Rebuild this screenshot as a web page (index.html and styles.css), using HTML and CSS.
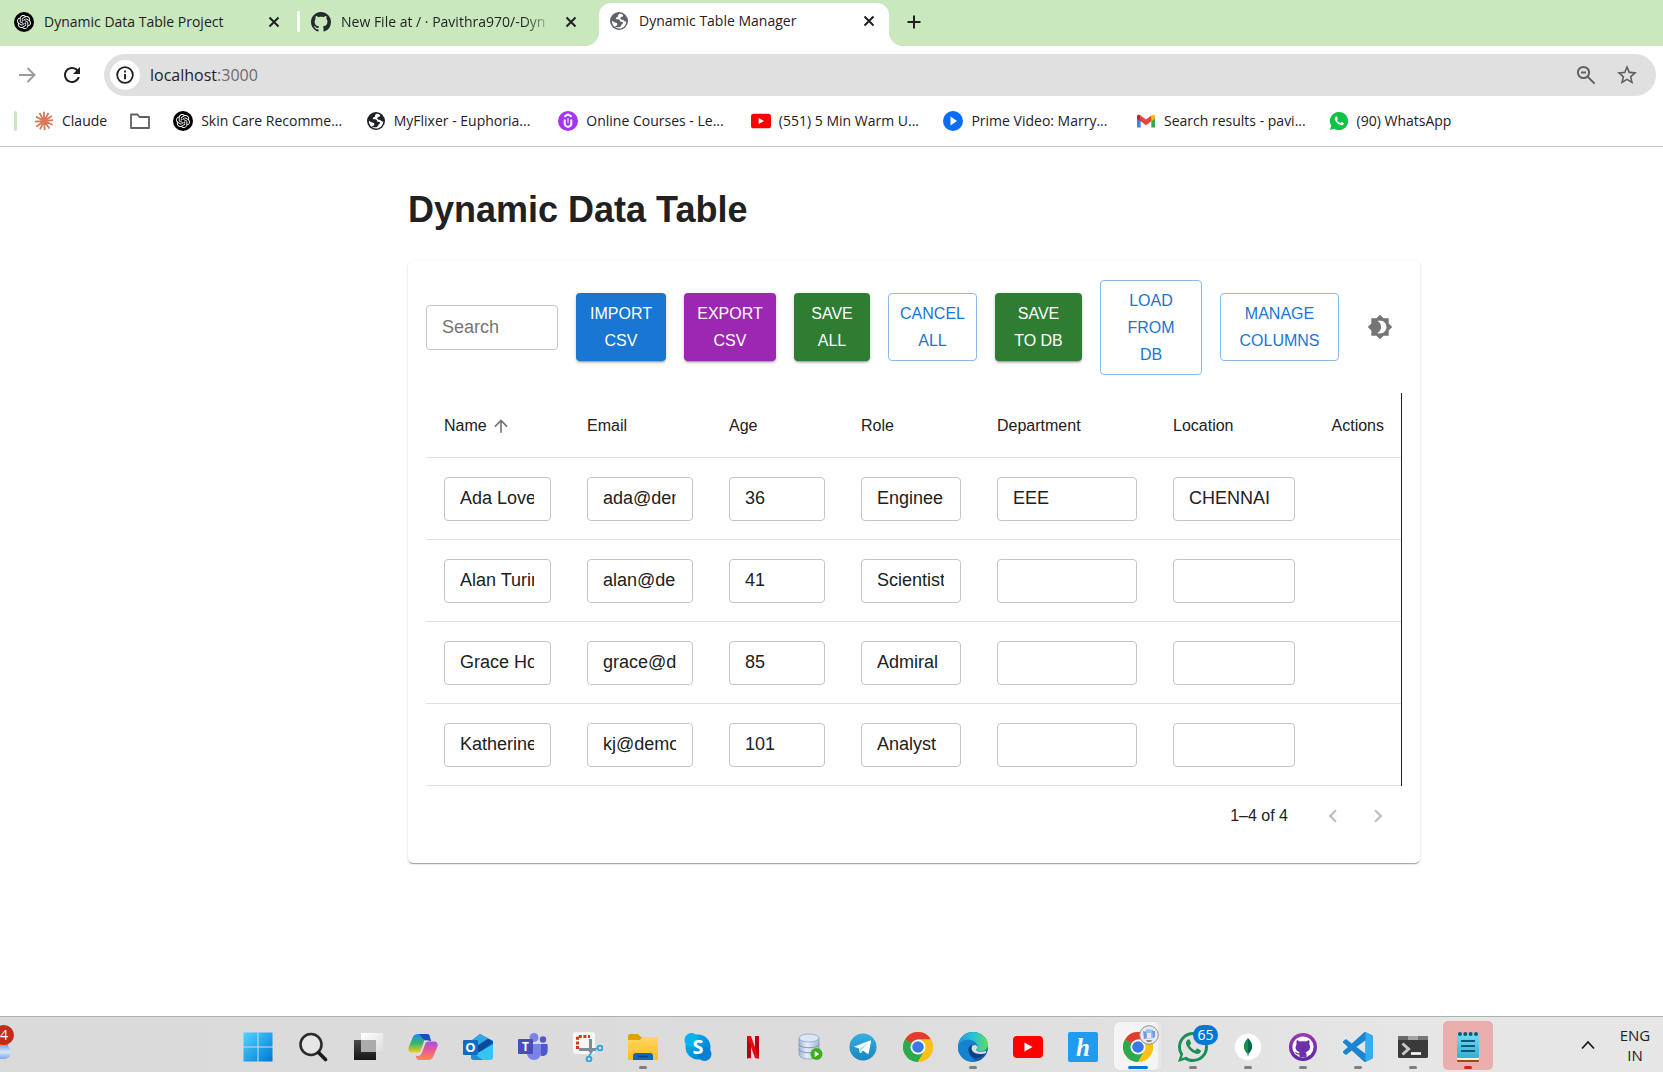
FILE: index.html
```html
<!DOCTYPE html>
<html lang="en">
<head>
<meta charset="utf-8">
<title>Dynamic Table Manager</title>
<link rel="stylesheet" href="styles.css">
</head>
<body>
<svg class="sprite" aria-hidden="true">
  <defs>
    <linearGradient id="gWin" x1="0" y1="0" x2="1" y2="1"><stop offset="0" stop-color="#4fd4ff"/><stop offset="1" stop-color="#0078d4"/></linearGradient>
    <linearGradient id="gCopL" x1="0" y1="0" x2="0" y2="1"><stop offset="0" stop-color="#1a8fe8"/><stop offset=".5" stop-color="#39b36b"/><stop offset="1" stop-color="#f2cf1d"/></linearGradient>
    <linearGradient id="gCopR" x1="0" y1="0" x2="0" y2="1"><stop offset="0" stop-color="#a84ee0"/><stop offset=".5" stop-color="#ee5a92"/><stop offset="1" stop-color="#ff8a4c"/></linearGradient>
    <linearGradient id="gFolder" x1="0" y1="0" x2="0" y2="1"><stop offset="0" stop-color="#ffd75e"/><stop offset="1" stop-color="#fbbd22"/></linearGradient>
    <linearGradient id="gSkype" x1="0" y1="0" x2="1" y2="1"><stop offset="0" stop-color="#00b7f0"/><stop offset="1" stop-color="#0078d0"/></linearGradient>
    <linearGradient id="gTele" x1="0" y1="0" x2="0" y2="1"><stop offset="0" stop-color="#37aee2"/><stop offset="1" stop-color="#1787c0"/></linearGradient>
    <linearGradient id="gEdge" x1="0" y1="0" x2="1" y2="0"><stop offset="0" stop-color="#1b9de2"/><stop offset=".55" stop-color="#2cc3cf"/><stop offset="1" stop-color="#62dc5a"/></linearGradient>
    <linearGradient id="gDesk" x1="0" y1="0" x2="0" y2="1"><stop offset="0" stop-color="#4a4a4a"/><stop offset="1" stop-color="#151515"/></linearGradient>
    <linearGradient id="gDb" x1="0" y1="0" x2="1" y2="0"><stop offset="0" stop-color="#9fb6d4"/><stop offset=".4" stop-color="#e6eefa"/><stop offset="1" stop-color="#a3b8d6"/></linearGradient>
    <linearGradient id="gGh" x1="0" y1="0" x2="0" y2="1"><stop offset="0" stop-color="#9a3ab4"/><stop offset="1" stop-color="#5a2aa0"/></linearGradient>
    <linearGradient id="gNote" x1="0" y1="0" x2="0" y2="1"><stop offset="0" stop-color="#6fdcf2"/><stop offset="1" stop-color="#35b0d2"/></linearGradient>
    <linearGradient id="gCloud" x1="0" y1="0" x2="0" y2="1"><stop offset="0" stop-color="#7fa8ee"/><stop offset=".5" stop-color="#d6e6fb"/><stop offset="1" stop-color="#7fa3ee"/></linearGradient>
    <linearGradient id="gGlass" x1="0" y1="0" x2="1" y2="1"><stop offset="0" stop-color="#fff"/><stop offset="1" stop-color="#dcdcdc"/></linearGradient>
    <symbol id="close" viewBox="0 0 12 12"><path d="M1.500 1.500l9 9M10.500 1.500l-9 9" stroke="#1f2023" stroke-width="2" fill="none"/></symbol>
    <symbol id="gpt" viewBox="0 0 24 24"><circle cx="12" cy="12" r="12" fill="#000"/><path transform="translate(3.600 3.600) scale(.7)" fill="#fff" d="M22.282 9.821a5.985 5.985 0 0 0-.516-4.910 6.046 6.046 0 0 0-6.510-2.900A6.065 6.065 0 0 0 4.981 4.182a5.985 5.985 0 0 0-3.998 2.900 6.046 6.046 0 0 0 .743 7.097 5.980 5.980 0 0 0 .511 4.911 6.051 6.051 0 0 0 6.515 2.900A5.985 5.985 0 0 0 13.260 24a6.056 6.056 0 0 0 5.772-4.206 5.989 5.989 0 0 0 3.998-2.900 6.056 6.056 0 0 0-.748-7.073zm-9.022 12.608a4.476 4.476 0 0 1-2.876-1.041l.142-.080 4.778-2.758a.795.795 0 0 0 .393-.681v-6.737l2.020 1.169a.071.071 0 0 1 .038.052v5.583a4.504 4.504 0 0 1-4.495 4.494zm-9.661-4.125a4.471 4.471 0 0 1-.535-3.014l.142.085 4.783 2.758a.771.771 0 0 0 .781 0l5.843-3.369v2.332a.080.080 0 0 1-.033.062L9.740 19.950a4.499 4.499 0 0 1-6.141-1.646zM2.341 7.896a4.485 4.485 0 0 1 2.366-1.973V11.600a.766.766 0 0 0 .388.677l5.814 3.354-2.020 1.169a.076.076 0 0 1-.071 0l-4.830-2.787A4.504 4.504 0 0 1 2.341 7.872zm16.596 3.856L13.104 8.364 15.119 7.200a.076.076 0 0 1 .071 0l4.830 2.791a4.494 4.494 0 0 1-.677 8.104v-5.677a.790.790 0 0 0-.407-.667zm2.011-3.023l-.142-.085-4.774-2.782a.776.776 0 0 0-.785 0L9.409 9.230V6.897a.066.066 0 0 1 .028-.062l4.830-2.787a4.499 4.499 0 0 1 6.680 4.660zM8.307 12.863l-2.020-1.164a.080.080 0 0 1-.038-.057V6.074a4.499 4.499 0 0 1 7.376-3.454l-.142.081L8.704 5.459a.795.795 0 0 0-.393.681zm1.098-2.365l2.602-1.500 2.607 1.500v2.999l-2.597 1.500-2.607-1.500Z"/></symbol>
    <symbol id="octo" viewBox="0 0 16 16"><path d="M8 0C3.580 0 0 3.580 0 8c0 3.540 2.290 6.530 5.470 7.590.4.070.55-.17.55-.38 0-.19-.01-.82-.01-1.490-2.010.37-2.530-.49-2.690-.94-.09-.23-.48-.94-.82-1.130-.28-.15-.68-.52-.01-.53.63-.01 1.080.58 1.230.82.72 1.210 1.870.87 2.330.66.07-.52.28-.87.51-1.070-1.780-.2-3.640-.89-3.640-3.950 0-.87.31-1.590.82-2.150-.08-.2-.36-1.020.08-2.120 0 0 .67-.21 2.200.82.64-.18 1.320-.27 2-.27.68 0 1.360.09 2 .27 1.530-1.040 2.200-.82 2.200-.82.44 1.100.16 1.920.08 2.120.51.56.82 1.270.82 2.150 0 3.070-1.870 3.750-3.650 3.950.29.25.54.73.54 1.480 0 1.070-.01 1.930-.01 2.200 0 .21.15.46.55.38A8.013 8.013 0 0 0 16 8c0-4.420-3.580-8-8-8z"/></symbol>
    <symbol id="globe" viewBox="0 0 20 20"><circle cx="10" cy="10" r="9" fill="currentColor"/><path fill="#fff" d="M10.500 2.800c-1 .6-1.600 1.200-1.500 2.200.1.900-.4 1.200-1.300 1.300-.8.100-1 .6-.8 1.400.2.700 1 .6 1.900.6 1.200 0 2 .5 2.200 1.500.2.900.9 1.100 2 1.100 1 0 1.200.7.800 1.700-.5 1-1.500 1-1.700 1.900-.2.900-.9 1.500-2 1.700-2 .3-3.800-.3-5-1.500 1.500.5 2.700.2 3.100-.8.400-1-.1-1.800-1.100-2.100-1.300-.4-2.700-.5-4.200-2.200-.1 4.500 2.900 7.900 7.100 7.900 4.400 0 7.200-3.300 7.200-7.300-1 .5-1.900.2-2.200-.5-.4-.8-1.300-.8-2.200-.9-1-.1-1.700-.9-1.400-1.800.3-.9 1-1.300 2.200-1.500.5-.1.600-.9.300-1.600-1-.8-2.200-1.100-3.400-1.100z"/></symbol>
    <symbol id="yt" viewBox="0 0 30 22"><rect width="30" height="22" rx="4" fill="#f00"/><path d="M11.500 6.500v9l8-4.500z" fill="#fff"/></symbol>
    <symbol id="wa" viewBox="0 0 24 24"><path d="M16.750 13.960c.25.13.41.2.46.3.06.11.04.61-.21 1.180-.2.56-1.240 1.100-1.700 1.120-.46.02-.47.36-2.960-.73-2.490-1.090-3.990-3.750-4.110-3.920-.12-.17-.96-1.380-.92-2.610.05-1.220.69-1.800.95-2.040.24-.26.51-.29.68-.26h.47c.15 0 .36-.06.55.45l.69 1.870c.06.13.1.28.01.44l-.27.41-.39.42c-.12.12-.26.25-.12.5.12.26.62 1.090 1.320 1.780.91.88 1.710 1.170 1.950 1.300.24.14.39.12.54-.04l.81-.94c.19-.25.35-.19.58-.11l1.670.88M12 2a10 10 0 0 1 10 10 10 10 0 0 1-10 10c-1.970 0-3.800-.57-5.350-1.550L2 22l1.550-4.650A9.969 9.969 0 0 1 2 12 10 10 0 0 1 12 2m0 2a8 8 0 0 0-8 8c0 1.720.54 3.310 1.460 4.610L4.500 19.500l2.890-.96A7.950 7.950 0 0 0 12 20a8 8 0 0 0 8-8 8 8 0 0 0-8-8z"/></symbol>
    <symbol id="chrome" viewBox="0 0 30 30"><circle cx="15" cy="15" r="15" fill="#fbc116"/><path d="M15 15L2 7.500A15 15 0 0 1 28 7.500H15z" fill="#e33b2e"/><path d="M2 7.500A15 15 0 0 0 15 30l6.500-11.250L15 15z" fill="#2da94f"/><path d="M15 7.500h13A15 15 0 0 1 15 30l6.500-11.250z" fill="#fbc116"/><circle cx="15" cy="15" r="7.500" fill="#fff"/><circle cx="15" cy="15" r="5.800" fill="#3b78e7"/></symbol>
  </defs>
</svg>

<header class="browser">
  <div class="tabs" role="tablist">
    <div class="tab tab-first" role="tab">
      <svg class="ico20"><use href="#gpt"/></svg>
      <span class="tab-title">Dynamic Data Table Project</span>
      <button class="tab-close" aria-label="Close tab"><svg class="ico12"><use href="#close"/></svg></button>
    </div>
    <div class="tab tab-second" role="tab">
      <svg class="ico20 octo"><use href="#octo"/></svg>
      <span class="tab-title faded">New File at / · Pavithra970/-Dyn</span>
      <button class="tab-close" aria-label="Close tab"><svg class="ico12"><use href="#close"/></svg></button>
    </div>
    <div class="tab tab-active" role="tab" aria-selected="true">
      <svg class="ico20 globe-grey"><use href="#globe"/></svg>
      <span class="tab-title">Dynamic Table Manager</span>
      <button class="tab-close" aria-label="Close tab"><svg class="ico12"><use href="#close"/></svg></button>
    </div>
    <button class="new-tab" aria-label="New tab"><svg class="ico14" viewBox="0 0 14 14"><path d="M7 .5v13M.5 7h13" stroke="#1f2023" stroke-width="2"/></svg></button>
  </div>

  <div class="address-row">
    <button class="nav-btn" aria-label="Forward"><svg class="ico18" viewBox="0 0 18 18"><path d="M1 9h15M9.500 2l7 7-7 7" fill="none" stroke="#9b9b9b" stroke-width="2"/></svg></button>
    <button class="nav-btn" aria-label="Reload"><svg class="ico24" viewBox="0 0 24 24"><path fill="#1f2023" d="M17.650 6.350C16.200 4.900 14.210 4 12 4c-4.420 0-7.990 3.580-7.990 8s3.570 8 7.990 8c3.730 0 6.840-2.550 7.730-6h-2.080c-.82 2.330-3.040 4-5.650 4-3.310 0-6-2.690-6-6s2.690-6 6-6c1.660 0 3.140.69 4.220 1.780L13 11h7V4l-2.350 2.350z"/></svg></button>
    <div class="omnibox">
      <button class="site-info" aria-label="Site information"><svg class="ico18" viewBox="0 0 18 18"><circle cx="9" cy="9" r="7.800" fill="none" stroke="#1f2023" stroke-width="1.800"/><path d="M9 8v5.200M9 4.600v2" stroke="#1f2023" stroke-width="1.900"/></svg></button>
      <span class="url">localhost<span class="port">:3000</span></span>
      <button class="omni-btn" aria-label="Zoom"><svg class="ico20" viewBox="0 0 20 20"><g fill="none" stroke="#5f6063" stroke-width="2"><circle cx="7.500" cy="7.500" r="5.600"/><path d="M11.600 11.600l7 7M5 7.500h5"/></g></svg></button>
      <button class="omni-btn" aria-label="Bookmark this tab"><svg class="ico24" viewBox="0 0 24 24"><path fill="#5f6063" d="M22 9.240l-7.190-.62L12 2 9.190 8.630 2 9.240l5.460 4.730L5.820 21 12 17.270 18.180 21l-1.630-7.030L22 9.240zM12 15.400l-3.760 2.270 1-4.280-3.320-2.880 4.380-.38L12 6.100l1.710 4.040 4.380.38-3.320 2.880 1 4.280L12 15.400z"/></svg></button>
    </div>
  </div>

  <nav class="bookmarks">
    <span class="group-mark"></span>
    <a class="bookmark" href="#"><svg class="ico20" viewBox="0 0 20 20"><path d="M10 10L10 .8M10 10l4.500-8M10 10l7.800-5M10 10l9.200-.8M10 10l8.600 3.800M10 10l5.500 7.500M10 10l.8 9.200M10 10l-4 8.300M10 10l-7.700 5.800M10 10l-9.200.6M10 10L2 5.600M10 10L5.500 2" stroke="#d97757" stroke-width="1.800" fill="none"/></svg>Claude</a>
    <a class="bookmark folder" href="#" aria-label="Folder"><svg class="ico20" viewBox="0 0 20 20"><path d="M1 3.500h6.500l2 2.500H19v11H1z" fill="none" stroke="#5f6063" stroke-width="1.800" stroke-linejoin="round"/></svg></a>
    <div class="bookmark-grid">
      <a class="bookmark" href="#"><svg class="ico20"><use href="#gpt"/></svg>Skin Care Recomme...</a>
      <a class="bookmark" href="#"><svg class="ico20 globe-dark"><use href="#globe"/></svg>MyFlixer - Euphoria...</a>
      <a class="bookmark" href="#"><svg class="ico20" viewBox="0 0 20 20"><circle cx="10" cy="10" r="10" fill="#a435f0"/><path d="M6.700 8.500v4a3.300 3.300 0 0 0 6.600 0v-4M6.300 5.600L10 3.500l3.700 2.100" fill="none" stroke="#fff" stroke-width="2"/><path d="M10 7v5" stroke="#fff" stroke-width="1"/></svg>Online Courses - Le...</a>
      <a class="bookmark" href="#"><svg class="ico20"><use href="#yt"/></svg>(551) 5 Min Warm U...</a>
      <a class="bookmark" href="#"><svg class="ico20" viewBox="0 0 20 20"><circle cx="10" cy="10" r="10" fill="#0a6cf5"/><path d="M7.500 5.500v9l6.500-4.500z" fill="#fff"/></svg>Prime Video: Marry...</a>
      <a class="bookmark" href="#"><svg class="ico20" viewBox="0 0 20 20"><path d="M1 5v11.500h3.700V8z" fill="#4285f4"/><path d="M19 5v11.500h-3.700V8z" fill="#34a853"/><path d="M15.300 4.500L18 3.400 19 5v2.500l-3.700 3z" fill="#fbbc04"/><path d="M1 5l1-1.600 2.700 1.100v6L1 7.500z" fill="#c5221f"/><path d="M4.700 4.500L10 8.600l5.300-4.100v5.700L10 14.200l-5.300-4z" fill="#ea4335"/></svg>Search results - pavi...</a>
      <a class="bookmark" href="#"><svg class="ico20" viewBox="1 1 22 22"><path d="M12 2a10 10 0 1 1-5.350 18.450L2 22l1.550-4.650A10 10 0 0 1 12 2z" fill="#10c245"/><path fill="#fff" d="M16.750 13.960c.25.13.41.2.46.3.06.11.04.61-.21 1.180-.2.56-1.240 1.100-1.700 1.120-.46.02-.47.36-2.960-.73-2.490-1.090-3.990-3.750-4.110-3.920-.12-.17-.96-1.380-.92-2.610.05-1.220.69-1.800.95-2.040.24-.26.51-.29.68-.26h.47c.15 0 .36-.06.55.45l.69 1.870c.06.13.1.28.01.44l-.27.41-.39.42c-.12.12-.26.25-.12.5.12.26.62 1.090 1.320 1.780.91.88 1.710 1.170 1.950 1.300.24.14.39.12.54-.04l.81-.94c.19-.25.35-.19.58-.11z"/></svg>(90) WhatsApp</a>
    </div>
  </nav>
</header>

<main class="page">
  <h1 class="page-title">Dynamic Data Table</h1>
  <section class="card">
    <div class="actions">
      <input class="field search" type="text" placeholder="Search" aria-label="Search">
      <button class="btn btn-blue w-import">IMPORT CSV</button>
      <button class="btn btn-purple w-export">EXPORT CSV</button>
      <button class="btn btn-green w-save">SAVE ALL</button>
      <button class="btn btn-outline w-cancel">CANCEL ALL</button>
      <button class="btn btn-green btn-roomy w-savedb">SAVE TO DB</button>
      <button class="btn btn-outline btn-roomy w-load">LOAD FROM DB</button>
      <button class="btn btn-outline btn-roomy w-manage">MANAGE COLUMNS</button>
      <button class="icon-btn theme" aria-label="Toggle theme"><svg class="ico26" viewBox="0 0 24 24"><path d="M20 8.690V4h-4.690L12 .69 8.690 4H4v4.690L.69 12 4 15.310V20h4.690L12 23.310 15.310 20H20v-4.690L23.310 12 20 8.690zM12 18c-.89 0-1.740-.2-2.500-.55C11.560 16.500 13 14.420 13 12s-1.440-4.500-3.500-5.450C10.260 6.200 11.110 6 12 6c3.310 0 6 2.690 6 6s-2.690 6-6 6z"/></svg></button>
    </div>

    <div class="table-wrap">
      <table class="data">
        <colgroup><col class="c-name"><col class="c-email"><col class="c-age"><col class="c-role"><col class="c-dept"><col class="c-loc"><col class="c-act"></colgroup>
        <thead>
          <tr>
            <th scope="col" aria-sort="ascending"><span class="sort">Name<svg class="ico20" viewBox="0 0 24 24"><path d="M4 12l1.410 1.410L11 7.830V20h2V7.830l5.580 5.590L20 12l-8-8-8 8z"/></svg></span></th>
            <th scope="col">Email</th><th scope="col">Age</th><th scope="col">Role</th><th scope="col">Department</th><th scope="col">Location</th><th scope="col" class="right">Actions</th>
          </tr>
        </thead>
        <tbody>
          <tr>
            <td><input class="field" aria-label="Name" value="Ada Lovelace"></td>
            <td><input class="field" aria-label="Email" value="ada@demo.com"></td>
            <td><input class="field" aria-label="Age" value="36"></td>
            <td><input class="field" aria-label="Role" value="Engineer"></td>
            <td><input class="field" aria-label="Department" value="EEE"></td>
            <td><input class="field" aria-label="Location" value="CHENNAI"></td>
            <td></td>
          </tr>
          <tr>
            <td><input class="field" aria-label="Name" value="Alan Turing"></td>
            <td><input class="field" aria-label="Email" value="alan@demo.com"></td>
            <td><input class="field" aria-label="Age" value="41"></td>
            <td><input class="field" aria-label="Role" value="Scientist"></td>
            <td><input class="field" aria-label="Department" value=""></td>
            <td><input class="field" aria-label="Location" value=""></td>
            <td></td>
          </tr>
          <tr>
            <td><input class="field" aria-label="Name" value="Grace Hopper"></td>
            <td><input class="field" aria-label="Email" value="grace@demo.com"></td>
            <td><input class="field" aria-label="Age" value="85"></td>
            <td><input class="field" aria-label="Role" value="Admiral"></td>
            <td><input class="field" aria-label="Department" value=""></td>
            <td><input class="field" aria-label="Location" value=""></td>
            <td></td>
          </tr>
          <tr>
            <td><input class="field" aria-label="Name" value="Katherine Johnson"></td>
            <td><input class="field" aria-label="Email" value="kj@demo.com"></td>
            <td><input class="field" aria-label="Age" value="101"></td>
            <td><input class="field" aria-label="Role" value="Analyst"></td>
            <td><input class="field" aria-label="Department" value=""></td>
            <td><input class="field" aria-label="Location" value=""></td>
            <td></td>
          </tr>
        </tbody>
      </table>
    </div>

    <div class="pager">
      <span class="pager-text">1–4 of 4</span>
      <button class="icon-btn" disabled aria-label="Previous page"><svg class="ico26" viewBox="0 0 24 24"><path d="M15.410 16.590L10.830 12l4.580-4.590L14 6l-6 6 6 6z"/></svg></button>
      <button class="icon-btn" disabled aria-label="Next page"><svg class="ico26" viewBox="0 0 24 24"><path d="M8.590 16.590L13.170 12 8.590 7.410 10 6l6 6-6 6z"/></svg></button>
    </div>
  </section>
</main>

<footer class="taskbar">
  <div class="widget">
    <svg class="weather" viewBox="0 0 10 18"><path d="M0 1h8v6H0z" fill="#f07a1c"/><path d="M0 3h4a6.500 6.500 0 0 1 0 14H0z" fill="url(#gCloud)"/></svg>
    <span class="widget-badge">4</span>
  </div>
  <div class="apps">
    <button class="app" aria-label="Start"><svg viewBox="0 0 30 30"><path d="M.5.5h14v14H.5zM15.500.5h14v14h-14zM.5 15.500h14v14H.5zM15.500 15.500h14v14h-14z" fill="url(#gWin)"/></svg></button>
    <button class="app" aria-label="Search"><svg viewBox="0 0 30 30"><circle cx="13" cy="12.500" r="10.500" fill="#e6e6e6" stroke="#2b2b2b" stroke-width="2.600"/><path d="M20.500 20.500l7 7" stroke="#1c1c1c" stroke-width="3.600" stroke-linecap="round"/></svg></button>
    <button class="app" aria-label="Task view"><svg viewBox="0 0 30 30"><rect x="1" y="8" width="22" height="20" fill="url(#gDesk)"/><rect x="8" y="1" width="22" height="19" fill="url(#gGlass)"/><path d="M8 8h15v12H8z" fill="#ababab"/></svg></button>
    <button class="app" aria-label="Copilot"><svg viewBox="0 0 30 30"><path d="M10 2h9c2 0 2.600 1.500 3.200 4H20c-2.500 0-3.600 2-4.200 4l-3 8c-.6 2-2 2.500-4 2.500H4c-3 0-4.300-2-3.400-5L4.500 6C5.300 3.300 7 2 10 2z" fill="url(#gCopL)"/><path d="M11 2h8c2 0 2.600 1.500 3.200 4l1 3c-5-1-6 0-8-2z" fill="#1650c8"/><path d="M20 28h-9c-2 0-2.600-1.500-3.200-4H10c2.500 0 3.600-2 4.200-4l3-8c.6-2 2-2.500 4-2.500H26c3 0 4.300 2 3.400 5L25.500 24c-.8 2.700-2.500 4-5.500 4z" fill="url(#gCopR)"/></svg></button>
    <button class="app" aria-label="Outlook"><svg viewBox="0 0 30 30"><path d="M8 9l9-7 13 7v14l-3 4H11z" fill="#1066b5"/><path d="M8 9l9-7 8 4.500L12 15z" fill="#32a9e7"/><path d="M12 15l14-8 4 3-14 11z" fill="#0a4a9a"/><path d="M30 12v13a3 3 0 0 1-3 3H11a3 3 0 0 1-3-3z" fill="#35c5f5"/><path d="M8 20l12 8h-9a3 3 0 0 1-3-3z" fill="#1a8fdc"/><rect x="0" y="8" width="15" height="15" rx="1" fill="#0f6cc0"/><text x="7.500" y="20" class="glyph" font-size="13">O</text></svg></button>
    <button class="app" aria-label="Teams"><svg viewBox="0 0 30 30"><circle cx="25" cy="7.500" r="3.200" fill="#5059c9"/><circle cx="16" cy="5.500" r="4.500" fill="#7b83eb"/><path d="M20 12h8.500c.8 0 1.200.5 1.200 1.200V19a5 5 0 0 1-8 4z" fill="#5059c9"/><path d="M9 12h14v9c0 4-3 7-7 7s-7-3-7-7z" fill="#7b83eb"/><rect x="0" y="7" width="15" height="15" rx="1" fill="#464eb8"/><text x="7.500" y="19" class="glyph" font-size="12">T</text></svg></button>
    <button class="app" aria-label="Snipping Tool"><svg viewBox="0 0 30 30"><rect x="0" y="0" width="22" height="22" rx="3" fill="#f6f6f6"/><path d="M4.500 17V4.500H17" fill="none" stroke="#d83b01" stroke-width="3" stroke-dasharray="3 1.600"/><path d="M17.500 7v13.500M6 17.500h17" stroke="#808b94" stroke-width="3"/><path d="M16 24l4-6 5-2" fill="none" stroke="#4d98c8" stroke-width="1.500"/><circle cx="27" cy="16" r="2.400" fill="none" stroke="#2ba3e3" stroke-width="1.800"/><circle cx="16" cy="27" r="2.400" fill="none" stroke="#2ba3e3" stroke-width="1.800"/></svg></button>
    <button class="app running" aria-label="File Explorer"><svg viewBox="0 0 30 30"><path d="M0 4a2 2 0 0 1 2-2h8l3 3h15a2 2 0 0 1 2 2v5H0z" fill="#e2a008"/><path d="M0 8h12l2-3h14.500c1 0 1.500.5 1.500 1.500V27c0 .7-.3 1-1 1H1c-.7 0-1-.3-1-1z" fill="url(#gFolder)"/><path d="M5 28v-4c0-2 1-3 3-3h14c2 0 3 1 3 3v4z" fill="#0f67b8"/><path d="M10 24.500h10" stroke="#0a4581" stroke-width="1.500"/></svg></button>
    <button class="app" aria-label="Skype"><svg viewBox="0 0 30 30"><circle cx="15" cy="15" r="12.500" fill="url(#gSkype)"/><circle cx="8.500" cy="8" r="7" fill="#00b2ee"/><circle cx="21.500" cy="22" r="7" fill="#0a80d4"/><text x="15" y="22" class="glyph" font-size="20">S</text></svg></button>
    <button class="app" aria-label="Netflix"><svg viewBox="0 0 30 30"><path d="M9 4h4v22l-4 .5zM17 4h4v22.500l-4-.5z" fill="#b1060f"/><path d="M9 4h4l8 22.500-4-.5z" fill="#e50914"/></svg></button>
    <button class="app" aria-label="Database"><svg viewBox="0 0 30 30"><path d="M6 6v16c0 3 4.500 5 10 5s10-2 10-5V6z" fill="url(#gDb)" stroke="#8097b8" stroke-width=".7"/><ellipse cx="16" cy="6" rx="10" ry="4" fill="#dce7f6" stroke="#8da4c6" stroke-width=".8"/><path d="M6 12c0 5 20 5 20 0M6 17c0 5 20 5 20 0" fill="none" stroke="#8097b8" stroke-width="1"/><circle cx="23.500" cy="22" r="6" fill="#3fae1b"/><path d="M21.700 19v6l4.500-3z" fill="#fff"/></svg></button>
    <button class="app" aria-label="Telegram"><svg viewBox="0 0 30 30"><circle cx="15" cy="15" r="13.500" fill="url(#gTele)"/><path d="M6.500 14.500L22 8.500c.8-.2 1.200.2 1 1L20.700 21c-.3 1-.9 1.100-1.700.6l-4-3-2.200 2.300c-.5.400-.9.200-1-.4l-1-4.200-4-1.200c-.8-.3-.9-.7-.3-1.100z" fill="#fff"/><path d="M11.500 16.500l8.500-5.300-6 6.200-1.200 3z" fill="#b8d8ea"/></svg></button>
    <button class="app" aria-label="Chrome"><svg><use href="#chrome"/></svg></button>
    <button class="app running" aria-label="Edge"><svg viewBox="0 0 30 30"><circle cx="15" cy="15" r="15" fill="#0c5cab"/><path d="M0 15C0 6 7 0 15 0s15 5.500 15 12.500c0 4.500-3.500 7-7.500 7-3.500 0-4.500-1.500-3.500-3s.5-5-4-5.500C7 10 0 13 0 15z" fill="url(#gEdge)"/><path d="M0 15.500C1 10 6 7.500 11 7.800c5 .2 8 3.200 8.200 6.500-2-3-8.700-2.800-8.700 3.200 0 5 4 9.500 8 11.500C9 32 0 25 0 15.500z" fill="#1583cf"/><path d="M10.500 17.500c0 5.500 5.500 10 10.500 8 2.500-1 4.700-2.500 6-4-4 1.500-9.500 1.500-12.500-1.500-1.500-1.500-2-4-.5-6.500-2 .5-3.500 2-3.500 4z" fill="#0d3f7d"/><path d="M14.500 13.500c2-1.500 5 0 5 2-.5 1-1.500 1.500-1 3 1 2 7 1.500 10 0l-.8 2.500c-3.500 1.500-9.700 1.500-12.700-1.500-1.500-1.500-2-4-.5-6z" fill="#dfdfdf"/></svg></button>
    <button class="app" aria-label="YouTube"><svg><use href="#yt"/></svg></button>
    <button class="app" aria-label="Hotstar"><svg viewBox="0 0 30 30"><rect width="30" height="30" rx="2" fill="#1f9bf0"/><text x="15" y="24" class="glyph glyph-script" font-size="25">h</text></svg></button>
    <button class="app current" aria-label="Chrome window"><svg><use href="#chrome"/></svg><svg class="profile" viewBox="0 0 20 20"><circle cx="10" cy="10" r="9.300" fill="#e4e9f4" stroke="#8e8e8e" stroke-width="1"/><path d="M5 14V8l3-4 6 1 1 8z" fill="#8fc2f0"/><path d="M8 13V8h4v5z" fill="#f2e6ec"/><path d="M4 6l3 1 1 5-3 2zM13 6h3v6l-2 1z" fill="#7797da"/><path d="M7 15h6l-1 2H8z" fill="#9d8b6b"/></svg></button>
    <button class="app running" aria-label="WhatsApp"><svg class="wa-green" viewBox="2 2 20 20"><use href="#wa" width="24" height="24"/></svg><span class="count">65</span></button>
    <button class="app running" aria-label="MongoDB"><svg viewBox="0 0 30 30"><circle cx="15" cy="15" r="13.500" fill="#fff" stroke="#ececec"/><path d="M15 6c6 6 5 12 0 16.500z" fill="#00684a"/><path d="M15 6c-6 6-5 12 0 16.500z" fill="#12924f"/><path d="M15 20v4" stroke="#6c8a7c" stroke-width="1"/></svg></button>
    <button class="app running" aria-label="GitHub Desktop"><svg viewBox="0 0 30 30"><circle cx="15" cy="15" r="14" fill="url(#gGh)"/><circle cx="15" cy="15" r="10.600" fill="#fff"/><path d="M9 8l3 1.600c2-.5 4-.5 6 0L21 8c.7 1.500.6 3 .2 4 2 3.500.3 7.500-3.700 8 .8.900 1 1.700 1 3v2h-7v-2.500c-3 .6-3.500-1.500-5-2.500 2-.5 2.500 1.500 4.500 1.300.2-.6.400-1 .9-1.300-4-.5-5.500-4.500-3.200-8-.4-1-.4-2.500.3-4z" fill="#6f2fa6"/></svg></button>
    <button class="app running" aria-label="Visual Studio Code"><svg viewBox="0 0 24 24"><path fill="#1a86d2" d="M23.150 2.587L18.210.21a1.494 1.494 0 0 0-1.705.29l-9.460 8.630-4.120-3.128a.999.999 0 0 0-1.276.057L.327 7.261A1 1 0 0 0 .326 8.740L3.899 12 .326 15.260a1 1 0 0 0 .001 1.479L1.650 17.940a.999.999 0 0 0 1.276.057l4.120-3.128 9.460 8.630a1.492 1.492 0 0 0 1.704.29l4.942-2.377A1.500 1.500 0 0 0 24 20.060V3.939a1.500 1.500 0 0 0-.85-1.352zm-5.146 14.861L10.826 12l7.178-5.448v10.896z"/><path d="M18 .1l5.150 2.487A1.500 1.500 0 0 1 24 3.940v16.120a1.500 1.500 0 0 1-.85 1.352L18 23.900z" fill="#35adf0"/></svg></button>
    <button class="app running" aria-label="Terminal"><svg viewBox="0 0 30 30"><rect x="0" y="4" width="30" height="22" rx="1.500" fill="#3a3a3a"/><path d="M0 8V5.500C0 4.500.5 4 1.500 4H10v4z" fill="#686868"/><path d="M10 4h10v4H10z" fill="#a5a5a5"/><path d="M20 4h8.500c1 0 1.500.5 1.500 1.500V8H20z" fill="#777"/><path d="M4.500 11.500l6 5.500-6 5.500" fill="none" stroke="#c9c9c9" stroke-width="3"/><path d="M13 21.500h10" stroke="#fff" stroke-width="2.600"/></svg></button>
    <button class="app alert running" aria-label="Notepad"><svg viewBox="0 0 30 30"><rect x="4" y="24" width="22" height="6" rx="1" fill="#9a4a12"/><rect x="4" y="24" width="22" height="4" fill="#f4f1ee"/><rect x="4" y="2" width="22" height="24" rx="1" fill="url(#gNote)"/><path d="M8 9h14M8 14h14M8 19h14" stroke="#0b5a7b" stroke-width="1.800"/><g fill="#0b5a7b"><circle cx="7" cy="2" r="2"/><circle cx="12.300" cy="2" r="2"/><circle cx="17.600" cy="2" r="2"/><circle cx="23" cy="2" r="2"/></g></svg></button>
  </div>
  <div class="tray">
    <button class="tray-btn" aria-label="Show hidden icons"><svg class="ico14" viewBox="0 0 14 14"><path d="M1 10.500l6-6.500 6 6.500" fill="none" stroke="#1b1b1b" stroke-width="1.800"/></svg></button>
    <button class="lang">ENG<br>IN</button>
  </div>
</footer>
</body>
</html>
```

FILE: styles.css
```css
* { box-sizing: border-box; }

body {
  margin: 0;
  min-height: 100vh;
  display: flex;
  flex-direction: column;
  background: #fff;
  color: #212121;
  font: 16px/24px "Liberation Sans", Arial, sans-serif;
}

button {
  margin: 0;
  padding: 0;
  border: 0;
  background: none;
  color: inherit;
  font: inherit;
}

svg { display: block; flex: none; }
.sprite { position: absolute; width: 0; height: 0; }
.ico12 { width: 12px; height: 12px; }
.ico14 { width: 14px; height: 14px; }
.ico18 { width: 18px; height: 18px; }
.ico20 { width: 20px; height: 20px; }
.ico24 { width: 24px; height: 24px; }
.ico26 { width: 26px; height: 26px; }

/* Browser frame */
.browser {
  font-family: "Open Sans", "Noto Sans", sans-serif;
  font-size: 14px;
  color: #1f2023;
  border-bottom: 1px solid #c8cacc;
}

.tabs {
  display: flex;
  height: 46px;
  padding-top: 3px;
  background: #c9e8be;
}

.tab {
  display: flex;
  align-items: center;
  height: 37px;
}
.tab-first { width: 297px; padding: 0 17px 0 14px; gap: 10px; }
.tab-second { width: 302px; padding: 0 22px 0 12px; gap: 10px; }
.tab-second::before {
  content: "";
  width: 3px;
  height: 21px;
  margin: 0 -10px 0 -12px;
  border-radius: 2px;
  background: #fff;
}
.tab-second .octo { margin-left: 11px; fill: #24292f; }

.tab-active {
  position: relative;
  width: 290px;
  height: 43px;
  padding: 0 14px 7px 10px;
  gap: 10px;
  background: #fff;
  border-radius: 12px 12px 0 0;
}
.tab-active::before,
.tab-active::after {
  content: "";
  position: absolute;
  bottom: 0;
  width: 14px;
  height: 14px;
}
.tab-active::before { right: 100%; background: radial-gradient(circle at 0 0, transparent 14px, #fff 14px); }
.tab-active::after { left: 100%; background: radial-gradient(circle at 100% 0, transparent 14px, #fff 14px); }

.tab-title {
  flex: 1;
  min-width: 0;
  white-space: nowrap;
}
.faded {
  -webkit-mask-image: linear-gradient(90deg, #000 85%, transparent);
  mask-image: linear-gradient(90deg, #000 85%, transparent);
}
.tab-close { width: 12px; height: 12px; }
.globe-grey { color: #5f6368; }
.globe-dark { color: #1f2226; }
.new-tab { height: 37px; margin-left: 18px; }

.address-row {
  display: flex;
  align-items: center;
  height: 58px;
  padding: 0 7px 0 4px;
}
.nav-btn {
  display: flex;
  align-items: center;
  justify-content: center;
  width: 45px;
  height: 42px;
}
.omnibox {
  flex: 1;
  display: flex;
  align-items: center;
  height: 42px;
  margin-left: 10px;
  padding: 0 17px 0 6px;
  border-radius: 21px;
  background: #e0e0e0;
}
.site-info {
  display: flex;
  align-items: center;
  justify-content: center;
  width: 30px;
  height: 30px;
  border-radius: 50%;
  background: #fff;
}
.url { flex: 1; margin-left: 10px; font-size: 16px; }
.port { color: #6b6c6f; }
.omni-btn { margin-left: 19px; }

.bookmarks {
  display: flex;
  align-items: center;
  height: 42px;
  padding: 0 0 8px 14px;
}
.group-mark {
  width: 3px;
  height: 20px;
  margin-right: 17px;
  border-radius: 2px;
  background: #c9e8be;
}
.bookmark {
  display: flex;
  align-items: center;
  gap: 8px;
  color: #1f2023;
  text-decoration: none;
  white-space: nowrap;
}
.folder { margin: 0 23px; }
.bookmark-grid {
  display: grid;
  grid-template-columns: repeat(7, 1fr);
  flex: 0 1 1348px;
}

/* Page */
.page { flex: 1; padding: 39px 243px 40px 408px; }
.page-title {
  margin: 0 0 27px;
  font-size: 36px;
  line-height: 48px;
  font-weight: 700;
}

.card {
  padding: 18px;
  border-radius: 5px;
  background: #fff;
  box-shadow: 0 2px 1px -1px rgba(0, 0, 0, .2), 0 1px 1px rgba(0, 0, 0, .14), 0 1px 3px rgba(0, 0, 0, .12);
}

.actions {
  display: flex;
  align-items: center;
  gap: 18px;
  min-height: 96px;
  margin-bottom: 18px;
}

.field {
  display: block;
  width: 100%;
  height: 44px;
  padding: 0 16px 0 15px;
  border: 1px solid #c4c4c4;
  border-radius: 4px;
  background: #fff;
  color: #212121;
  font: 18px/24px "Liberation Sans", Arial, sans-serif;
}
.field::placeholder { color: #757575; opacity: 1; }
.search { flex: 1 1 0; min-width: 0; height: 45px; }

.btn {
  flex: none;
  padding: 7px 10px;
  border-radius: 4px;
  font-size: 16px;
  line-height: 27px;
  text-align: center;
}
.btn-roomy { padding: 7px 16px; }
.btn-blue, .btn-purple, .btn-green {
  color: #fff;
  box-shadow: 0 3px 1px -2px rgba(0, 0, 0, .2), 0 2px 2px rgba(0, 0, 0, .14), 0 1px 5px rgba(0, 0, 0, .12);
}
.btn-blue { background: #1976d2; }
.btn-purple { background: #9c27b0; }
.btn-green { background: #2e7d32; }
.btn-outline {
  padding-top: 6px;
  padding-bottom: 6px;
  border: 1px solid #8cbae8;
  color: #1976d2;
}
.w-import { width: 90px; }
.w-export { width: 92px; }
.w-save { width: 76px; }
.w-cancel { width: 89px; }
.w-savedb { width: 87px; }
.w-load { width: 102px; }
.w-manage { width: 119px; }

.icon-btn {
  display: flex;
  flex: none;
  align-items: center;
  justify-content: center;
  width: 45px;
  height: 45px;
  fill: #bdbdbd;
}
.theme { fill: #757575; }

.table-wrap { border-right: 1px solid #212121; }
.data {
  width: 100%;
  table-layout: fixed;
  border-collapse: separate;
  border-spacing: 0;
}
.data th, .data td {
  padding: 0 18px;
  border-bottom: 1px solid #e0e0e0;
  vertical-align: middle;
}
.data th {
  height: 65px;
  padding-top: 1px;
  font-weight: 400;
  text-align: left;
}
.data td { height: 82px; }
.data .right { padding-right: 17px; padding-left: 17px; text-align: right; }
.c-name { width: 143px; }
.c-email { width: 142px; }
.c-age { width: 132px; }
.c-role { width: 136px; }
.c-dept { width: 176px; }
.c-loc { width: 158px; }
.c-act { width: 88px; }
.sort { display: flex; align-items: center; gap: 4px; }
.sort svg { fill: #757575; }

.pager {
  display: flex;
  align-items: center;
  justify-content: flex-end;
  height: 59px;
  padding-right: 2px;
}
.pager-text { margin-right: 22px; }

/* Taskbar */
.taskbar {
  display: flex;
  align-items: center;
  height: 56px;
  border-top: 1px solid #adb0ad;
  background: linear-gradient(90deg, #dadada, #dcdcdc 50%, #e6e6e6 85%);
  font-family: "Open Sans", "Noto Sans", sans-serif;
}
.widget { position: relative; width: 230px; height: 55px; }
.weather { position: absolute; left: 0; top: 25px; width: 10px; height: 18px; }
.widget-badge {
  position: absolute;
  left: -6px;
  top: 8px;
  width: 20px;
  height: 20px;
  border-radius: 10px;
  background: #c42b1c;
  color: #fff;
  font-size: 14px;
  line-height: 20px;
  text-align: center;
}
.apps { display: flex; }
.app {
  position: relative;
  display: flex;
  align-items: center;
  justify-content: center;
  width: 55px;
  height: 55px;
  padding-top: 4px;
}
.app svg { position: relative; width: 30px; height: 30px; }
.app.running::after, .app.current::after {
  content: "";
  position: absolute;
  left: 24px;
  bottom: 3px;
  width: 8px;
  height: 3px;
  border-radius: 2px;
  background: #7f7f7f;
}
.app.current::before, .app.alert::before {
  content: "";
  position: absolute;
  left: 4px;
  top: 5px;
  width: 48px;
  height: 48px;
  border-radius: 5px;
  background: #f4f4f4;
  box-shadow: inset -4px 0 0 #e6e6e6, 0 0 1px #bbb;
}
.app.alert::before { left: 3px; top: 4px; width: 50px; height: 49px; background: #eaafac; box-shadow: none; }
.app.current::after { left: 18px; width: 20px; background: #0078d4; }
.app.alert::after { background: #c42b1c; }
.app .profile { position: absolute; left: 29px; top: 8px; width: 20px; height: 20px; }
.wa-green { fill: #1b8f56; }
.count {
  position: absolute;
  right: 2px;
  top: 8px;
  width: 25px;
  height: 20px;
  border-radius: 10px;
  background: #0078d4;
  color: #fff;
  font-size: 14px;
  line-height: 20px;
  text-align: center;
}
.glyph {
  fill: #fff;
  font-family: "Open Sans", sans-serif;
  font-weight: 700;
  text-anchor: middle;
}
.glyph-script { font-family: "Liberation Serif", serif; font-style: italic; }
.tray {
  display: flex;
  align-items: center;
  gap: 24px;
  margin-left: auto;
  padding-right: 12px;
}
.lang {
  width: 32px;
  font-size: 15px;
  line-height: 20px;
  text-align: center;
}
```
